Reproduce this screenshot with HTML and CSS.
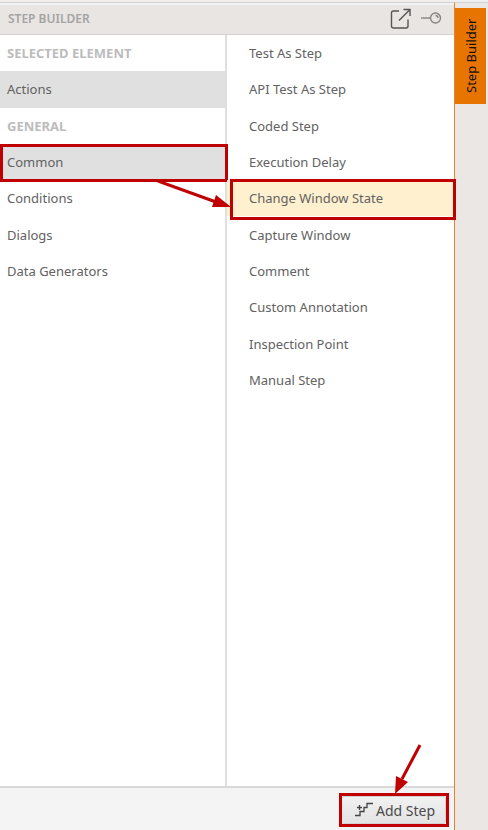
FILE: index.html
```html
<!DOCTYPE html>
<html lang="en">
<head>
<meta charset="utf-8">
<meta name="viewport" content="width=device-width, initial-scale=1">
<title>Step Builder</title>
<link rel="stylesheet" href="styles.css">
</head>
<body>
<div class="workspace">
  <main class="panel">
    <header class="panel-header">
      <h1 class="panel-title">Step Builder</h1>
      <button class="icon-button" type="button" aria-label="Open in window">
        <svg width="22" height="22" viewBox="0 0 22 22" fill="none" stroke="#555" stroke-width="1.4">
          <path d="M9 3H3.500Q1.500 3 1.500 5V18Q1.500 20 3.500 20H16Q18 20 18 18V11.500M9 12.500L20 1.500M13.500 1.500H20V8"/>
        </svg>
      </button>
      <button class="icon-button" type="button" aria-label="Pin panel">
        <svg width="22" height="14" viewBox="0 0 22 14" fill="none" stroke="#858585" stroke-width="1.4">
          <path d="M1 6H10"/><circle cx="15.500" cy="6" r="5"/><path d="M15.500 3.500Q18 3.500 18 6"/>
        </svg>
      </button>
    </header>
    <div class="columns">
      <nav class="categories" aria-label="Step categories">
        <div class="list">
          <h2 class="row group">Selected Element</h2>
          <button class="row selected" type="button">Actions</button>
          <h2 class="row group">General</h2>
          <button class="row selected marked" type="button">Common</button>
          <button class="row" type="button">Conditions</button>
          <button class="row" type="button">Dialogs</button>
          <button class="row" type="button">Data Generators</button>
        </div>
      </nav>
      <section class="steps" aria-label="Steps">
        <div class="list">
          <button class="row" type="button">Test As Step</button>
          <button class="row" type="button">API Test As Step</button>
          <button class="row" type="button">Coded Step</button>
          <button class="row" type="button">Execution Delay</button>
          <button class="row current marked" type="button">Change Window State
            <svg class="arrow arrow-right" width="76" height="32" viewBox="0 0 76 32"><path d="M3 1L61 22" stroke="#c00000" stroke-width="3"/><path d="M61 15L76 27L57 27Z" fill="#c00000"/></svg>
          </button>
          <button class="row" type="button">Capture Window</button>
          <button class="row" type="button">Comment</button>
          <button class="row" type="button">Custom Annotation</button>
          <button class="row" type="button">Inspection Point</button>
          <button class="row" type="button">Manual Step</button>
        </div>
      </section>
    </div>
    <footer class="panel-footer">
      <button class="add-step marked" type="button">
        <svg width="20" height="16" viewBox="0 0 20 16" fill="none" stroke="#444" stroke-width="1.3"><path d="M1 13.500H6V9.500H10V5.500H13V1.500H19M3 5.500H8M5.500 3V8"/></svg>
        Add Step
        <svg class="arrow arrow-down" width="28" height="52" viewBox="0 0 28 52"><path d="M26 2L8 36" stroke="#c00000" stroke-width="3"/><path d="M1 51L2 33L14 39Z" fill="#c00000"/></svg>
      </button>
    </footer>
  </main>
  <aside class="dock">
    <button class="dock-tab" type="button">Step Builder</button>
  </aside>
</div>
</body>
</html>
```
FILE: styles.css
```css
* { box-sizing: border-box; }

body {
  margin: 0;
  font-family: "Noto Sans", "Open Sans", sans-serif;
  font-size: 13px;
  color: #626262;
  background: #f0efee;
}

button {
  font: inherit;
  color: inherit;
  border: 0;
  background: none;
  cursor: pointer;
}

.workspace {
  display: flex;
  min-height: 100vh;
  padding-top: 2px;
}

.panel {
  flex: 1;
  display: flex;
  flex-direction: column;
  border-top: 1px solid #d2d2d2;
  border-right: 1px solid #e88424;
  background: #fff;
}

.panel-header {
  display: flex;
  align-items: center;
  gap: 8px;
  height: 32px;
  padding: 0 12px 2px 8px;
  border-top: 2px solid #f3f3f3;
  border-bottom: 1px solid #d4d1cf;
  background: #e9e5e2;
}

.panel-title {
  flex: 1;
  margin: 0;
  font-size: 12px;
  font-weight: 600;
  text-transform: uppercase;
  color: #a4a4a4;
}

.icon-button {
  display: flex;
  padding: 0;
}

.columns {
  flex: 1;
  display: grid;
  grid-template-columns: 1fr 1fr;
}

.categories { border-right: 2px solid #dfdfdf; }

.list {
  display: grid;
  grid-template-rows: repeat(10, 1fr);
  height: 363px;
}

.row {
  position: relative;
  display: flex;
  align-items: center;
  margin: 0;
  padding: 0 7px;
  text-align: left;
}

.steps .row { padding: 0 22px; }

.group {
  font-size: 13px;
  font-weight: 700;
  text-transform: uppercase;
  color: #bcbcbc;
}

.selected { background: #e0e0e0; }

.current { background: #fff0cf; }

.marked::after {
  content: "";
  position: absolute;
  border: 3px solid #c00000;
  pointer-events: none;
}

.row.marked { z-index: 1; }

.categories .marked::after { inset: 0 -3px -2px 0; }

.steps .marked::after { inset: -1px -2px -4px 3px; }

.arrow {
  position: absolute;
  pointer-events: none;
}

.arrow-right {
  right: calc(100% - 4px);
  top: 0;
}

.arrow-down {
  left: 52px;
  bottom: 28px;
}

.panel-footer {
  display: flex;
  justify-content: flex-end;
  height: 44px;
  padding: 8px 8px 6px;
  border-top: 2px solid #d9d9d9;
  background: #f4f4f4;
}

.add-step {
  position: relative;
  display: flex;
  align-items: center;
  gap: 2px;
  padding: 0 10px 0 12px;
  border: 1px solid #d2d2d2;
  border-radius: 3px;
  background: linear-gradient(#f1f1f1, #e4e4e4);
  font-size: 14px;
  color: #4a4a4a;
}

.add-step.marked::after { inset: -4px -4px -4px -3px; }

.dock {
  width: 33px;
  padding: 5px 2px 0 0;
  border-top: 1px solid #d2d2d2;
  background: #ebe7e4;
}

.dock-tab {
  display: flex;
  align-items: center;
  justify-content: center;
  width: 100%;
  height: 96px;
  padding: 0;
  background: #e87400;
  color: #111;
  writing-mode: vertical-rl;
  transform: rotate(180deg);
}
```
